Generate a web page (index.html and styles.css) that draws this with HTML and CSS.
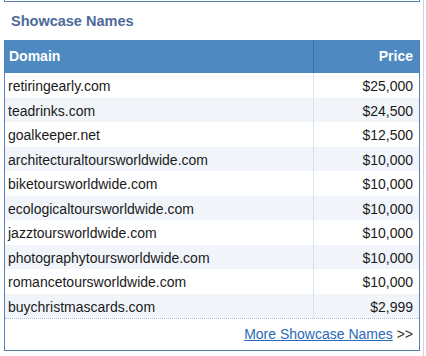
FILE: index.html
```html
<!DOCTYPE html>
<html>
<head>
<meta charset="utf-8">
<link rel="stylesheet" href="styles.css">
</head>
<body>
<div class="page">
  <div class="topbox"></div>
  <h2 class="title">Showcase Names</h2>
  <div class="box">
    <div class="grid">
      <div class="hd dom">Domain</div>
      <div class="hd price">Price</div>

      <div class="cell dom">retiringearly.com</div><div class="cell price">$25,000</div>
      <div class="cell dom alt">teadrinks.com</div><div class="cell price alt">$24,500</div>
      <div class="cell dom">goalkeeper.net</div><div class="cell price">$12,500</div>
      <div class="cell dom alt">architecturaltoursworldwide.com</div><div class="cell price alt">$10,000</div>
      <div class="cell dom">biketoursworldwide.com</div><div class="cell price">$10,000</div>
      <div class="cell dom alt">ecologicaltoursworldwide.com</div><div class="cell price alt">$10,000</div>
      <div class="cell dom">jazztoursworldwide.com</div><div class="cell price">$10,000</div>
      <div class="cell dom alt">photographytoursworldwide.com</div><div class="cell price alt">$10,000</div>
      <div class="cell dom">romancetoursworldwide.com</div><div class="cell price">$10,000</div>
      <div class="cell dom alt">buychristmascards.com</div><div class="cell price alt">$2,999</div>
    </div>
    <div class="foot"><a href="#" class="more">More Showcase Names</a> &gt;&gt;</div>
  </div>
</div>
</body>
</html>
```

FILE: styles.css
```css
html, body {
  margin: 0;
  padding: 0;
  background: #fff;
}
body {
  font-family: "Liberation Sans", Arial, sans-serif;
  font-size: 14px;
  color: #1a1a1a;
}
.page {
  width: 419px;
  height: 356px;
  padding-left: 4px;
  border-right: 1px solid #c9d5e3;
}
.topbox {
  width: 416px;
  height: 2px;
  box-sizing: border-box;
  border: 1px solid #5581b6;
  border-top: none;
}
.title {
  margin: 0;
  height: 38px;
  box-sizing: border-box;
  padding: 11px 0 0 7px;
  font-size: 14.5px;
  line-height: 17px;
  font-weight: bold;
  color: #4d6a99;
}
.box {
  width: 416px;
  box-sizing: border-box;
  border: 1px solid #5581b6;
  border-top: none;
}
.grid {
  display: grid;
  grid-template-columns: 308px 106px;
  grid-template-rows: 33px;
  grid-auto-rows: 24.5px;
}
.hd {
  background: #4f89c1;
  color: #fff;
  font-weight: bold;
  line-height: 33px;
}
.hd.dom {
  padding-left: 4px;
}
.hd.price {
  text-align: right;
  padding-right: 6px;
  border-left: 1px solid #41729f;
}
.cell {
  box-sizing: border-box;
  padding-top: 6px;
  line-height: 15px;
  white-space: nowrap;
}
.cell.dom {
  padding-left: 3px;
}
.cell.price {
  text-align: right;
  padding-right: 6px;
  border-left: 1px solid #d2e3f1;
}
.alt {
  background: #f1f5fa;
}
.foot {
  height: 32px;
  box-sizing: border-box;
  border-top: 1px dotted #a9bed6;
  padding: 7px 6px 0 0;
  line-height: 16px;
  text-align: right;
  color: #333;
}
.more {
  color: #2a6ab8;
  text-decoration: underline;
}
```
